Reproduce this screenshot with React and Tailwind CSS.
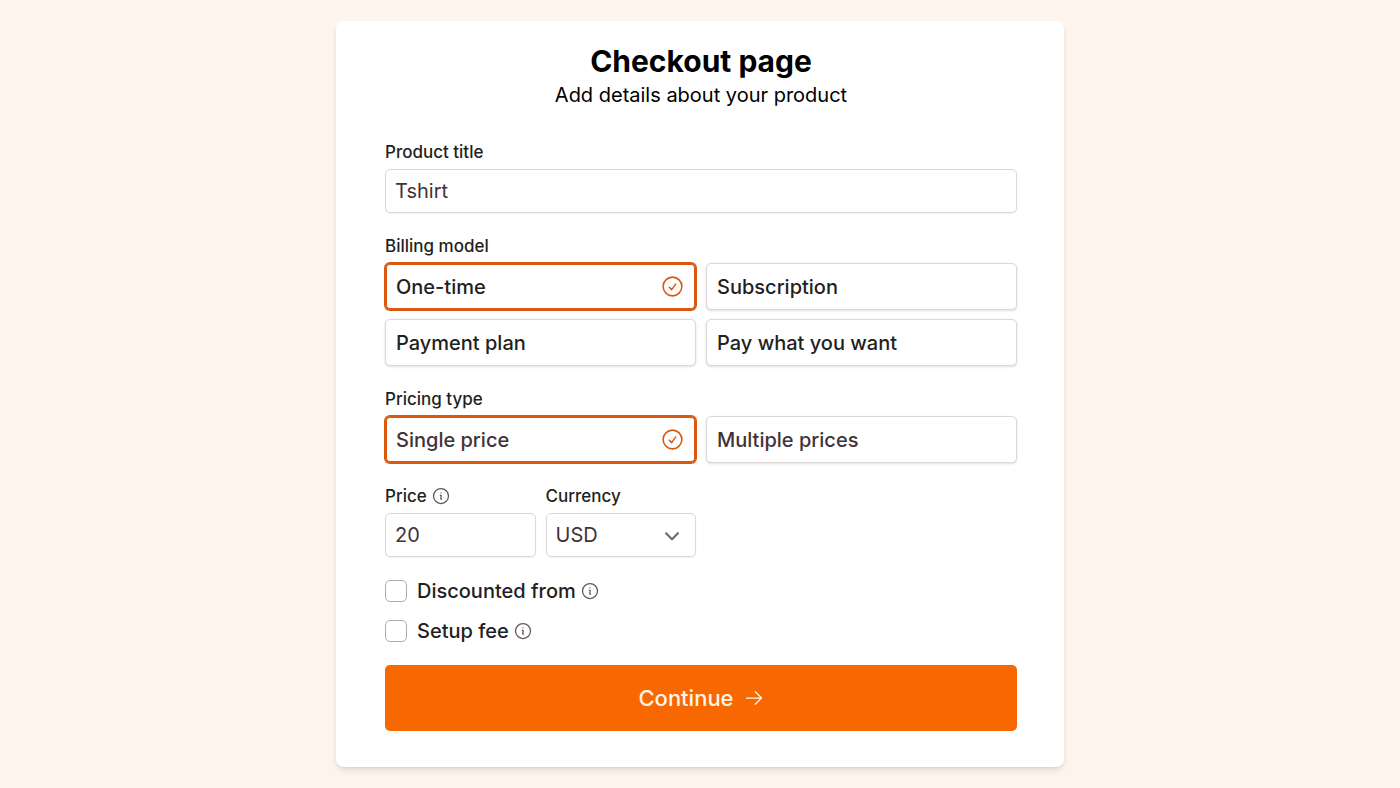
import { useState } from "react";
import {
  HiMiniChevronDown,
  HiOutlineArrowRight,
  HiOutlineCheckCircle,
  HiOutlineInformationCircle,
} from "react-icons/hi2";

const billingModels = ["One-time", "Subscription", "Payment plan", "Pay what you want"];
const pricingTypes = ["Single price", "Multiple prices"];

const labelClass = "text-[17px] leading-[26px] font-medium text-[#231f20]";
const fieldClass =
  "w-full h-11 px-[9px] rounded-[5px] border border-[#dcd7d9] bg-white text-xl text-[#3f3338] shadow-xs";

function OptionGroup({ id, title, options, value, onChange, textClass }) {
  return (
    <div role="radiogroup" aria-labelledby={id} className="flex flex-col gap-1">
      <div id={id} className={labelClass}>
        {title}
      </div>
      <div className="grid grid-cols-2 gap-x-2.5 gap-y-[9px]">
        {options.map((option) => (
          <label
            key={option}
            className={`flex items-center h-[47px] px-2.5 rounded-[5px] border bg-white text-xl font-medium cursor-pointer ${textClass} ${
              value === option
                ? "border-[#d9580d] ring-1 ring-[#d9580d] inset-ring-1 inset-ring-[#d9580d]"
                : "border-[#dcd7d9] shadow-sm"
            }`}
          >
            <input
              type="radio"
              name={id}
              value={option}
              checked={value === option}
              onChange={() => onChange(option)}
              className="appearance-none"
            />
            <span className="flex-1">{option}</span>
            {value === option && <HiOutlineCheckCircle className="size-[25px] text-[#d9580d]" />}
          </label>
        ))}
      </div>
    </div>
  );
}

function Checkbox({ label }) {
  return (
    <div className="flex items-center h-7">
      <label className="flex items-center gap-2.5 text-xl font-medium text-[#231f20]">
        <input
          type="checkbox"
          className="appearance-none size-[22px] rounded-[5px] border border-[#b5aaaf] bg-white checked:bg-[#f76800]"
        />
        {label}
      </label>
      <HiOutlineInformationCircle className="size-5 ml-1 text-[#65565c]" />
    </div>
  );
}

export default function App() {
  const [title, setTitle] = useState("Tshirt");
  const [billing, setBilling] = useState("One-time");
  const [pricing, setPricing] = useState("Single price");
  const [price, setPrice] = useState("20");
  const [currency, setCurrency] = useState("USD");

  return (
    <div className="min-h-screen bg-[#fef4eb] py-[21px] font-['Inter',sans-serif]">
      <form
        onSubmit={(e) => e.preventDefault()}
        className="max-w-[728px] mx-auto pl-[49px] pr-[47px] pt-[22px] pb-9 bg-white rounded-lg shadow-md"
      >
        <div className="text-center text-black mb-7">
          <h1 className="text-3xl leading-9 font-bold">Checkout page</h1>
          <p className="text-xl leading-8">Add details about your product</p>
        </div>

        <div className="flex flex-col gap-5">
          <div className="flex flex-col gap-1">
            <label htmlFor="title" className={labelClass}>
              Product title
            </label>
            <input
              id="title"
              type="text"
              value={title}
              onChange={(e) => setTitle(e.target.value)}
              className={fieldClass}
            />
          </div>

          <OptionGroup
            id="billing"
            title="Billing model"
            options={billingModels}
            value={billing}
            onChange={setBilling}
            textClass="text-[#231f20]"
          />
          <OptionGroup
            id="pricing"
            title="Pricing type"
            options={pricingTypes}
            value={pricing}
            onChange={setPricing}
            textClass="text-[#3f3338]"
          />

          {/* Price and currency */}
          <div className="grid grid-cols-4 gap-2.5">
            <div className="flex flex-col gap-1">
              <div className="flex items-center gap-1">
                <label htmlFor="price" className={labelClass}>
                  Price
                </label>
                <HiOutlineInformationCircle className="size-5 text-[#65565c]" />
              </div>
              <input
                id="price"
                type="text"
                value={price}
                onChange={(e) => setPrice(e.target.value)}
                className={fieldClass}
              />
            </div>
            <div className="flex flex-col gap-1">
              <label htmlFor="currency" className={labelClass}>
                Currency
              </label>
              <div className="grid items-center">
                <select
                  id="currency"
                  value={currency}
                  onChange={(e) => setCurrency(e.target.value)}
                  className={`${fieldClass} appearance-none col-start-1 row-start-1`}
                >
                  <option>USD</option>
                  <option>EUR</option>
                  <option>GBP</option>
                </select>
                <HiMiniChevronDown className="size-7 mr-2.5 col-start-1 row-start-1 justify-self-end pointer-events-none text-[#75666c]" />
              </div>
            </div>
          </div>

          <div className="flex flex-col gap-3">
            <Checkbox label="Discounted from" />
            <Checkbox label="Setup fee" />
          </div>

          <button
            type="submit"
            className="flex items-center justify-center gap-2.5 h-[66px] w-full rounded-[5px] bg-[#f76800] text-[22px] font-medium text-[#fff5ea]"
          >
            Continue
            <HiOutlineArrowRight className="size-5" />
          </button>
        </div>
      </form>
    </div>
  );
}
